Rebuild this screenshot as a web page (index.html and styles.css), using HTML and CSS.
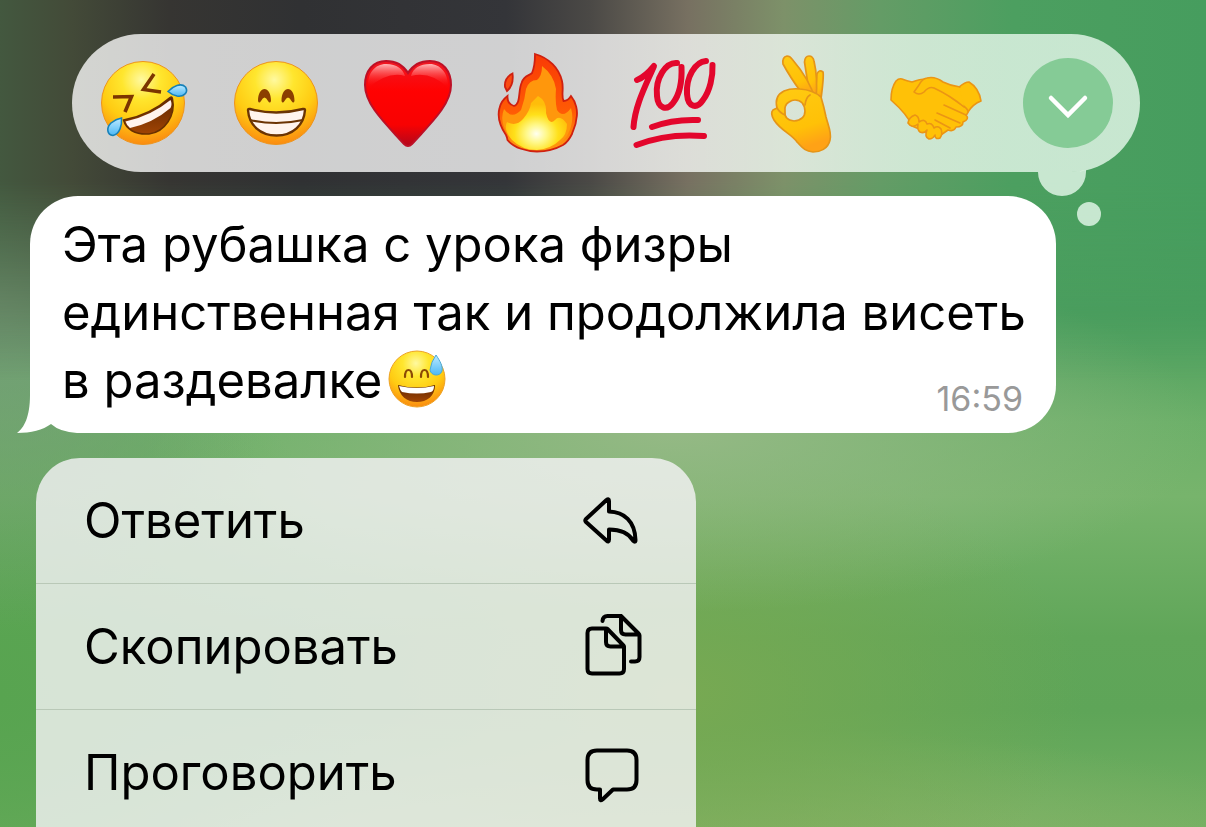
FILE: index.html
```html
<!DOCTYPE html>
<html lang="ru">

<head>
    <meta charset="UTF-8">
    <meta name="viewport" content="width=device-width, initial-scale=1.0">
    <title>Чат</title>
    <link rel="stylesheet" href="styles.css">
</head>

<body>
    <main class="chat">
        <div class="reactions">
            <button class="reaction" aria-label="Смеюсь до слёз">
                <svg viewBox="0 0 96 104">
                    <defs>
                        <radialGradient id="face" cx="48%" cy="22%" r="78%">
                            <stop offset="0" stop-color="#fff9a0" />
                            <stop offset="0.3" stop-color="#ffe62e" />
                            <stop offset="0.65" stop-color="#ffcb12" />
                            <stop offset="1" stop-color="#fb8b10" />
                        </radialGradient>
                        <linearGradient id="mouth" x1="0" y1="0" x2="0" y2="1">
                            <stop offset="0" stop-color="#5e2600" />
                            <stop offset="1" stop-color="#a04404" />
                        </linearGradient>
                        <linearGradient id="tear" x1="0" y1="0" x2="0" y2="1">
                            <stop offset="0" stop-color="#bdeaff" />
                            <stop offset="1" stop-color="#4cb8f5" />
                        </linearGradient>
                    </defs>
                    <circle cx="47" cy="52" r="41.500" fill="url(#face)" stroke="#ee941b" />
                    <path d="M58 23L47.500 38.500L65 41M17 46L35.500 45.500L29 61" fill="none" stroke="#7c3500" stroke-width="3.600" stroke-linejoin="miter" />
                    <path d="M27.500 69Q54 64 74 46.500Q76 45 76.500 48C80 64 69 81 53 83C39 84 30 78 27.500 69Z" fill="url(#mouth)" stroke="#693000" stroke-width="1.500" />
                    <path d="M29.500 70.500Q55 65 74.500 49Q76.500 53 74.500 57Q57 72 34 77Q31 75 29.500 70.500Z" fill="#fff4ee" />
                    <path d="M72 40.500C77 35 85 31.500 89.500 36C93 42 87 46 81 45Q76 44 72 40.500Z" fill="url(#tear)" stroke="#1681b9" stroke-width="1.600" />
                    <path d="M25.500 67C26 74 24 83 17 84.500C11 84 10 77 15 72Q20 68 25.500 67Z" fill="url(#tear)" stroke="#1681b9" stroke-width="1.600" />
                </svg>
            </button>
            <button class="reaction" aria-label="Широкая улыбка">
                <svg viewBox="0 0 96 104">
                    <circle cx="48" cy="52" r="41.500" fill="url(#face)" stroke="#ee941b" />
                    <path d="M30 50C30 34 43 34 43 50Q42 53 40 50Q36.500 43 33 50Q31 53 30 50ZM53.500 50C53.500 34 66.500 34 66.500 50Q65.500 53 63.500 50Q60 43 56.500 50Q54.500 53 53.500 50Z" fill="#8b3f00" />
                    <path d="M20 59Q20 57.500 22 58Q48 65 75 58Q77 57.500 77 59C76 74 65 84.500 48.500 84.500S21 74 20 59Z" fill="#fff4ee" stroke="#6b3404" stroke-width="2.400" />
                    <path d="M22 69Q48 75 75 69" fill="none" stroke="#6b3404" stroke-width="2.200" />
                </svg>
            </button>
            <button class="reaction" aria-label="Сердце">
                <svg viewBox="0 0 96 104">
                    <defs>
                        <linearGradient id="shine" x1="0" y1="0" x2="0" y2="1">
                            <stop offset="0" stop-color="#ffb5b5" />
                            <stop offset="1" stop-color="#ff0505" stop-opacity="0" />
                        </linearGradient>
                        <linearGradient id="heart" x1="0" y1="0" x2="0" y2="1">
                            <stop offset="0" stop-color="#f01824" />
                            <stop offset="0.35" stop-color="#ff0202" />
                            <stop offset="0.75" stop-color="#f80202" />
                            <stop offset="1" stop-color="#b3061b" />
                        </linearGradient>
                    </defs>
                    <path d="M48 22C42 12 34 10 26 10C13 10 5 20 5 34C5 54 26 73 44 93Q48 97 52 93C70 73 91 54 91 34C91 20 83 10 70 10C62 10 54 12 48 22Z" fill="url(#heart)" stroke="#bd1026" stroke-width="2" />
                    <path d="M8 37C7 22 15 13 26 13S43 18 45 25Q28 20 8 37ZM51 25C53 17 60 13 70 13S89 22 88 37Q71 20 51 25Z" fill="url(#shine)" />
                </svg>
            </button>
            <button class="reaction" aria-label="Огонь">
                <svg viewBox="0 0 96 104">
                    <defs>
                        <linearGradient id="flame" x1="0" y1="0" x2="0" y2="1">
                            <stop offset="0" stop-color="#f93a05" />
                            <stop offset="0.6" stop-color="#ff5b05" />
                            <stop offset="1" stop-color="#ff9d12" />
                        </linearGradient>
                        <radialGradient id="core" cx="50%" cy="70%" r="55%">
                            <stop offset="0" stop-color="#fffff0" />
                            <stop offset="0.3" stop-color="#fff88a" />
                            <stop offset="0.65" stop-color="#ffe01a" />
                            <stop offset="1" stop-color="#ffbd0a" />
                        </radialGradient>
                    </defs>
                    <path d="M43 3C57 7 67 17 70 30C72 38 69 44 71.500 50Q76 50 79 45C84 51 86 60 84.500 67C84 75 81 79 80 83Q76 91 71 94C62 99 53 100.500 45 100.500C35 100.500 22 97 15.500 89Q15 86 14 84C8 75 5 66 7.500 57Q9 50 15.500 45Q15 53 22 55C29 53 26 40 29.500 32C32 24 37 25 40 22Q43 15 43 3Z" fill="url(#flame)" stroke="#cf2010" stroke-width="1.800" />
                    <path d="M20.500 22.500Q12 27 13 36L15 40Q22 34 20.500 22.500Z" fill="#f94b12" stroke="#cf2010" stroke-width="1.800" />
                    <path d="M50 15Q62 24 64 38Q63 51 65 59Q71 68 79 57Q83 71 75 85Q65 98 45 98Q25 98 16 84Q7 70 12 58Q20 69 29 59Q33 48 34 38Q37 29 45 29Q50 25 50 15Z" fill="#ff970c" />
                    <path d="M46 45Q55 50 54 62Q57 75 63 69Q68 63 75 73Q75 84 68 89Q59 98 45 99Q30 99 20 89Q11 78 15 71Q24 76 31 68Q38 60 39 52Z" fill="url(#core)" />
                </svg>
            </button>
            <button class="reaction" aria-label="Сто баллов">
                <svg viewBox="0 0 96 104" fill="none" stroke="#e3062c" stroke-width="6" stroke-linecap="round" stroke-linejoin="round">
                    <path d="M13 29Q21 26 30 15C22 34 11 54 9.500 76" />
                    <path d="M53 12C42 11 31 27 33 45C34 58 43 60 49 52C56 43 58 28 57.500 16" />
                    <path d="M82 10C71 11 62 26 63 43C64 57 73 58 79 49C86 40 89 25 88.500 14" />
                    <path d="M28 76Q49 68 74 69" />
                    <path d="M12.500 94Q43 82 80 85" />
                </svg>
            </button>
            <button class="reaction" aria-label="Окей">
                <svg viewBox="0 0 96 104">
                    <defs>
                        <linearGradient id="hand" x1="0" y1="0" x2="0.300" y2="1">
                            <stop offset="0" stop-color="#ffcb12" />
                            <stop offset="0.7" stop-color="#ffc107" />
                            <stop offset="1" stop-color="#ffa216" />
                        </linearGradient>
                    </defs>
                    <g fill="url(#hand)" stroke="#e59518" stroke-width="1.700" stroke-linejoin="round">
                        <path d="M59 46L61 23Q63 18 67 21Q68 25 65 48Z" />
                        <path d="M53 40L48.500 11Q49 5 53 5Q57 5 58 10Q62 27 60 49Z" />
                        <path d="M45 41Q34 26 27 13Q26 6 31 5Q34 5 36 8Q54 29 59 48Z" />
                        <path fill-rule="evenodd" d="M44 38Q57 39 65 46Q68 56 70 66C72 74 76 82 74 89C72 98 64 101 57 101C48 100 46 96 41 91C36 83 25 80 18 69Q14 62 17 59L21 57Q18 45 28 40Q35 37 44 38ZM33 51Q28 54 29 60Q28 69 38 70Q49 69 49 60Q48 49 39 49Q36 49 33 51Z" />
                    </g>
                    <path d="M21 57Q24 62 29 64M49 54Q50 46 54 44" fill="none" stroke="#e59518" stroke-width="1.700" stroke-linecap="round" />
                </svg>
            </button>
            <button class="reaction" aria-label="Рукопожатие">
                <svg viewBox="0 0 96 104">
                    <g fill="#ffc107" stroke="#eb9514" stroke-width="1.600" stroke-linejoin="round" stroke-linecap="round">
                        <path d="M71 36Q77 31 81 31Q91 37 93 50Q85 53 80 61L60 60L50 37Z" />
                        <path d="M14 28Q19 30 24 31Q32 28 38 28L71 52C80 57 82 61 78 64Q82 68 75 71Q75 76 68 76Q66 81 60 79L50 86L24 75Q20 64 3 49Q3 37 8 30Q11 27 14 28Z" />
                        <path d="M27 64Q21 66 20 72Q24 78 30 73Q29 79 32 81Q36 83 39 79Q36 86 41 88Q45 88 47 84Q47 89 52 87Q55 83 53 78Q50 74 46 77Q44 71 39 73Q37 67 31 71Q31 65 27 64Z" />
                        <path d="M26 42Q33 28 39 27Q47 25 55 31Q63 35 71 36L76 56Q61 45 47 37Q42 37 38 41Q31 45 26 42Z" stroke="none" />
                        <path d="M72 36Q63 35 55 31Q47 25 39 27Q34 28 31 34L26 41Q31 45 36 41Q41 35 46 37Q63 45 76 56" fill="none" />
                        <path d="M56 54L78 64M49 62L72 72M47 69L62 77" fill="none" />
                    </g>
                </svg>
            </button>
            <div class="more-slot">
                <button class="more-button" aria-label="Ещё реакции">
                    <svg viewBox="0 0 90 90">
                        <path d="M28 40L45 57L62 40" fill="none" stroke="#fff" stroke-width="4.500" stroke-linecap="round" stroke-linejoin="miter" />
                    </svg>
                </button>
            </div>
            <!-- thought-cloud tail -->
            <svg class="cloud-tail" viewBox="0 0 63 57">
                <path d="M0 2H34Q41 1.500 48 0V2A24 24 0 0 1 0 2Z" />
                <circle cx="51" cy="44" r="12" />
            </svg>
        </div>

        <div class="message">
            <svg class="message-tail" viewBox="0 0 60 60">
                <path d="M13 0V22C13 44 7 55 0 60C14 60 26 57 34 51Q43 59 60 60V0Z" />
            </svg>
            <p class="message-text">Эта рубашка с урока физры единственная так и продолжила висеть <time class="message-time">16:59</time>в раздевалке<svg class="text-emoji" viewBox="0 0 58 58" role="img" aria-label="Улыбка с каплей пота">
                    <circle cx="29" cy="29" r="28" fill="url(#face)" stroke="#eda326" />
                    <path d="M17 27Q17 20 20.500 20T24 27M33 27Q33 20 36.500 20T40 27" fill="none" stroke="#8b4a05" stroke-width="2.200" stroke-linecap="round" />
                    <path d="M10 35Q29 40 47 35C47 46 39 52 29 52S11 46 10 35Z" fill="url(#mouth)" />
                    <path d="M11 36Q29 40 46 36Q46 41 43 42Q29 45 14 42Q12 40 11 36Z" fill="#fff" />
                    <path d="M48 5C52 11 55 16 54 21C52 27 43 26 42 20Q43 12 48 5Z" fill="url(#tear)" stroke="#4ba9d4" />
                </svg></p>
        </div>

        <nav class="menu">
            <button class="menu-item">
                <span>Ответить</span>
                <svg class="menu-icon" viewBox="0 0 60 64">
                    <path d="M4 30L24.500 11Q27 9 27 12V22.500C42 23 53 32 53.500 51Q53.500 54 51 51.500C46 43 38 40.500 27 40.500V50.500Q27 54 24.500 51.500L4 33Q2.500 31.500 4 30Z" />
                </svg>
            </button>
            <button class="menu-item">
                <span>Скопировать</span>
                <svg class="menu-icon" viewBox="0 0 60 64">
                    <path d="M24 13.500H10Q5.500 13.500 5.500 18V54Q5.500 58.500 10 58.500H37.500Q42 58.500 42 54V31.500Q42 31 41 30L25.500 14Q25 13.500 24 13.500V27Q24 31.500 28.500 31.500H42" />
                    <path d="M20.500 6Q21 1 25.500 1H38.500Q39.500 1 40 2L56.500 18.500Q57.500 19.500 57.500 20.500V42Q57.500 46.500 53 46.500H49M39 1V15Q39 19.500 43.500 19.500H57" />
                </svg>
            </button>
            <button class="menu-item">
                <span>Проговорить</span>
                <svg class="menu-icon" viewBox="0 0 60 64">
                    <path d="M15 9.500H45Q54.500 9.500 54.500 19V39Q54.500 48.500 45 48.500H31L20.500 58.500Q18 60.500 18 57.500V48.500H15Q5.500 48.500 5.500 39V19Q5.500 9.500 15 9.500Z" />
                </svg>
            </button>
        </nav>
    </main>
</body>

</html>
```

FILE: styles.css
```css
* {
    margin: 0;
    padding: 0;
    box-sizing: border-box;
    font-family: Inter, "Liberation Sans", sans-serif;
}

.chat {
    position: relative;
    z-index: 0;
    height: 100vh;
    padding: 34px 66px 0 30px;
    overflow: hidden;
    background:
        radial-gradient(ellipse 24% 40% at 0% 36%, #789f79 0%, rgba(120, 159, 121, 0) 100%),
        radial-gradient(ellipse 44% 22% at 56% 52%, #95b985 0%, rgba(140, 185, 120, 0) 100%),
        radial-gradient(ellipse 34% 30% at 56% 84%, #78a952 0%, rgba(118, 168, 82, 0) 100%),
        radial-gradient(ellipse 50% 16% at 62% 104%, #8bb368 0%, rgba(139, 179, 104, 0) 100%),
        radial-gradient(ellipse 30% 50% at 0% 84%, #58a450 0%, rgba(88, 164, 80, 0) 100%),
        linear-gradient(180deg, #469f5e 0%, #4a9d5d 38%, #6cb069 51%, #77b46c 60%, #60a659 77%, #5ea558 86%, #72b062 100%);
}

/* dark blurred area behind the reactions */
.chat::before {
    content: "";
    position: absolute;
    inset: 0;
    z-index: -1;
    background: linear-gradient(90deg, #43583f 0%, #434a38 6%, #363532 14%, #303133 25%, #343539 42%, #4b4946 49%, #777061 57%, #7d9169 65%, #649c66 73%, #4c9f60 84%, #469d5e 100%);
    mask-image: linear-gradient(180deg, #000 22%, transparent 46%);
}

.reactions {
    position: relative;
    display: flex;
    justify-content: space-between;
    margin-left: 42px;
    padding: 17px 24px;
    border-radius: 69px;
    background: linear-gradient(90deg, rgba(255, 255, 255, 0.77) 50%, rgba(242, 255, 246, 0.75) 80%);
}

.reaction,
.more-button {
    border: none;
    background: none;
    cursor: pointer;
}

.reaction {
    width: 96px;
    height: 104px;
}

.reaction svg,
.more-button svg {
    display: block;
    width: 100%;
}

.more-slot {
    display: flex;
    align-items: center;
    justify-content: center;
    width: 96px;
}

.more-button {
    width: 90px;
    height: 90px;
    border-radius: 50%;
    background: #85cb96;
}

.cloud-tail {
    position: absolute;
    top: 136px;
    right: 39px;
    width: 63px;
    height: 57px;
    fill: rgba(242, 255, 246, 0.75);
}

.message {
    position: relative;
    margin: 24px 84px 25px 0;
    padding: 15px 24px 18px 32px;
    border-radius: 48px 48px 48px 0;
    background: #fff;
    background: linear-gradient(#fff, #fff) 47px 0 no-repeat, linear-gradient(#fff, #fff) 0 0 / 100% 180px no-repeat;
}

.message-tail {
    position: absolute;
    left: -13px;
    bottom: 0;
    width: 60px;
    height: 60px;
    fill: #fff;
}

.message-text {
    position: relative;
    font-size: 49px;
    line-height: 68px;
    color: #000;
}

.message-time {
    float: right;
    margin: 32px 9px 0 0;
    font-size: 34px;
    line-height: 40px;
    color: #999;
}

.text-emoji {
    width: 58px;
    height: 58px;
    margin-left: 6px;
    vertical-align: -10px;
}

.menu {
    width: 660px;
    max-width: 100%;
    margin-left: 6px;
    border-radius: 44px 44px 0 0;
    background: rgba(246, 244, 247, 0.8);
    overflow: hidden;
}

.menu-item {
    display: flex;
    align-items: center;
    justify-content: space-between;
    width: 100%;
    height: 126px;
    padding: 0 54px 0 48px;
    border: none;
    border-bottom: 1px solid #b9c8b7;
    background: none;
    font-size: 49px;
    color: #000;
    text-align: left;
    cursor: pointer;
}

.menu-icon {
    width: 60px;
    height: 64px;
    overflow: visible;
    fill: none;
    stroke: #000;
    stroke-width: 4;
    stroke-linecap: round;
    stroke-linejoin: round;
}
```
